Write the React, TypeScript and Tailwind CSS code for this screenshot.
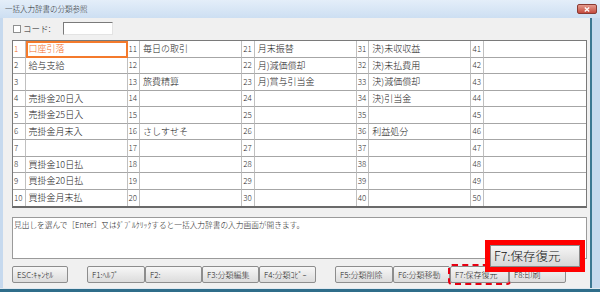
import React from "react";

// 一括入力辞書の分類参照 window

const FONT = { fontFamily: '"Noto Sans CJK JP", "Noto Sans", sans-serif' };

const columns: string[][] = [
  ["口座引落", "給与支給", "", "売掛金20日入", "売掛金25日入", "売掛金月末入", "", "買掛金10日払", "買掛金20日払", "買掛金月末払"],
  ["毎日の取引", "", "旅費精算", "", "", "さしすせそ", "", "", "", ""],
  ["月末振替", "月)減価償却", "月)賞与引当金", "", "", "", "", "", "", ""],
  ["決)未収収益", "決)未払費用", "決)減価償却", "決)引当金", "", "利益処分", "", "", "", ""],
  ["", "", "", "", "", "", "", "", "", ""],
];

const leftButtons = ["F1:ﾍﾙﾌﾟ", "F2:", "F3:分類編集", "F4:分類ｺﾋﾟｰ"];
const rightButtons = ["F5:分類削除", "F6:分類移動", "F7:保存復元", "F8:印刷"];

const Btn = ({ label, w, marked }: { label: string; w: string; marked?: boolean }) => (
  <div
    className={`${w} h-[17px] flex items-center pl-[4px] text-[8px] text-[#222] leading-none border border-[#8d8d8d] rounded-[2px] bg-gradient-to-b from-[#f7f7f7] to-[#dcdcdc] ${
      marked ? "outline-2 outline-dashed outline-[#e60012] outline-offset-[0px]" : ""
    }`}
  >
    {label}
  </div>
);

const Table = () => {
  const rows = Array.from({ length: 10 }, (_, r) => r);
  return (
    <div className="w-[575px] h-[168px] border border-[#7a7a7a] border-b-2 border-b-[#6a6a6a] bg-white">
      <div className="grid h-full grid-cols-[repeat(5,12.5px_minmax(0,1fr))] grid-rows-[repeat(10,minmax(0,1fr))]">
        {rows.map((r) =>
          columns.map((col, c) => {
            const num = c * 10 + r + 1;
            const sel = num === 1;
            const lastRow = r === 9;
            const lastCol = c === 4;
            return (
              <React.Fragment key={num}>
                <div
                  className={`flex items-center pl-[1px] text-[8px] leading-none border-r border-[#c0c0c0] ${
                    lastRow ? "" : "border-b border-b-[#a6a6a6]"
                  } ${sel ? "text-[#f26b1d]" : "text-[#333]"}`}
                >
                  {num}
                </div>
                <div
                  className={`flex items-center pl-[3px] text-[9px] leading-none whitespace-nowrap overflow-hidden ${
                    lastCol ? "" : "border-r border-[#c0c0c0]"
                  } ${lastRow ? "" : "border-b border-b-[#a6a6a6]"} ${
                    sel ? "text-[#f26b1d] outline-2 outline-[#f47a2c] -outline-offset-2" : "text-[#1a1a1a]"
                  }`}
                >
                  {col[r]}
                </div>
              </React.Fragment>
            );
          })
        )}
      </div>
    </div>
  );
};

export default function App() {
  return (
    <div className="relative w-[600px] h-[292px] overflow-hidden flex flex-col bg-[#c9dcf0] font-light" style={FONT}>
      {/* title bar */}
      <div className="h-[18px] flex items-center pl-[5px] bg-gradient-to-b from-[#e4eef9] to-[#cddff2] relative">
        <span className="text-[7.5px] text-[#1e1e1e] leading-none">一括入力辞書の分類参照</span>
        <div className="absolute right-[3px] top-[4px] w-[20px] h-[10px] rounded-[2px] border border-[#8a3a32] bg-gradient-to-b from-[#e39a8e] to-[#c4493d] flex items-center justify-center">
          <svg width="6" height="5" viewBox="0 0 6 5">
            <path d="M0.8 0.5 L5.2 4.5 M5.2 0.5 L0.8 4.5" stroke="#fff" strokeWidth="1.3" />
          </svg>
        </div>
      </div>

      <div className="flex flex-1 min-h-0">
        <div className="w-[3px] bg-[#c6d9ee]" />
        {/* client area */}
        <div className="flex-1 bg-[#f0f0f0] flex flex-col pl-[9px] pt-[4px]">
          <div className="h-[13px] flex items-center">
            <div className="w-[8px] h-[8px] border border-[#8e8f8f] bg-white ml-[1px]" />
            <span className="ml-[2px] text-[8.5px] leading-none text-[#1a1a1a]">コード:</span>
            <div className="ml-[12px] w-[50px] h-[13px] bg-white border border-[#7a7a7a] border-r-[#e3e3e3] border-b-[#e3e3e3]" />
          </div>

          <div className="mt-[5px]">
            <Table />
          </div>

          <div className="mt-[9px] w-[575px] h-[42px] bg-white border border-[#9a9a9a] px-[1px] pt-[3px]">
            <p className="text-[7.7px] leading-none text-[#1a1a1a] whitespace-nowrap">
              見出しを選んで［Enter］又はﾀﾞﾌﾞﾙｸﾘｯｸすると一括入力辞書の入力画面が開きます。
            </p>
          </div>

          <div className="mt-[7px] flex">
            <Btn label="ESC:ｷｬﾝｾﾙ" w="w-[56px]" />
            <div className="ml-[19px] flex">
              <Btn label={leftButtons[0]} w="w-[58px]" />
              <Btn label={leftButtons[1]} w="w-[57px]" />
              <Btn label={leftButtons[2]} w="w-[57px]" />
              <Btn label={leftButtons[3]} w="w-[57px]" />
            </div>
            <div className="ml-[19px] flex">
              <Btn label={rightButtons[0]} w="w-[58px]" />
              <Btn label={rightButtons[1]} w="w-[57px]" />
              <Btn label={rightButtons[2]} w="w-[59px]" marked />
              <Btn label={rightButtons[3]} w="w-[57px]" />
            </div>
          </div>
        </div>
        <div className="w-[10px] bg-[#c6d9ee] border-l-2 border-[#3c7792]" />
      </div>
      <div className="h-[4px] bg-[#2f6d8a] border-t border-[#dfe8f0]" />

      {/* callout */}
      <div className="absolute left-[485px] top-[240px] w-[100px] h-[32px] border-[5px] border-[#ff0000] bg-[#ff0000]">
        <div className="w-full h-full flex items-center pl-[3px] bg-gradient-to-b from-[#f6f6f6] to-[#d6d6d6] border border-[#8a8a8a]">
          <span className="text-[12.5px] leading-none text-[#111]">F7:保存復元</span>
        </div>
      </div>
    </div>
  );
}
